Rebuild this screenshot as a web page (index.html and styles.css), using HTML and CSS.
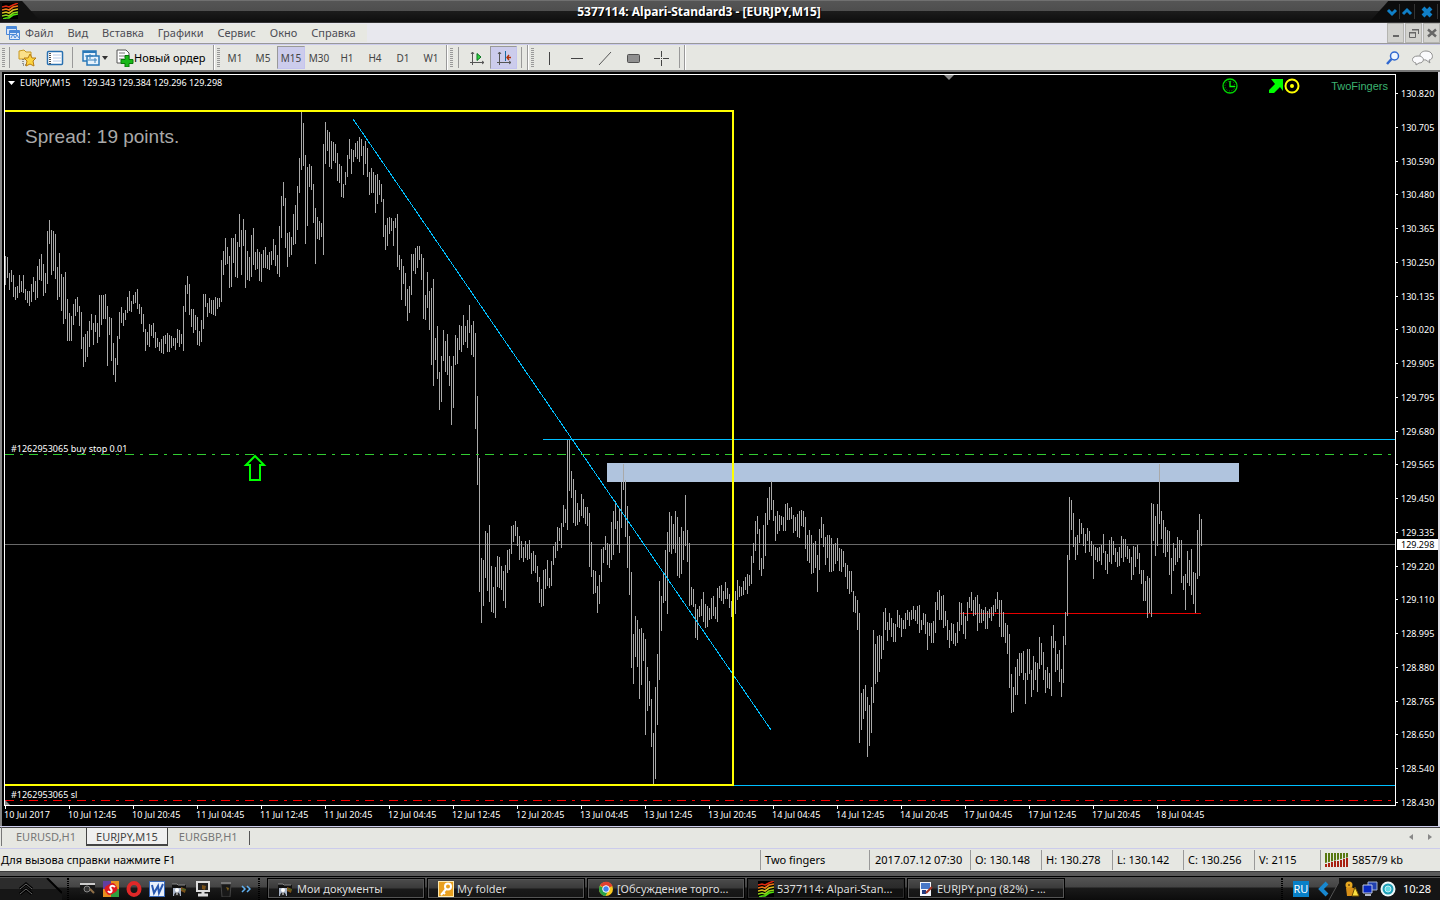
FILE: index.html
```html
<!DOCTYPE html>
<html lang="ru">
<head>
<meta charset="utf-8">
<title>5377114: Alpari-Standard3 - [EURJPY,M15]</title>
<link rel="stylesheet" href="styles.css">
</head>
<body>
<svg class="defs" width="0" height="0" aria-hidden="true">
  <symbol id="logo" viewBox="0 0 16 16">
    <rect width="16" height="16" fill="#000"/>
    <g fill="none" stroke-width="1.6">
      <path d="M0 4l4-1 3 1 4-2 5-2" stroke="#e02810"/>
      <path d="M0 7l4-1 3 1 4-3 5-1" stroke="#f07818"/>
      <path d="M0 10l4-1 3 1 4-3 5-1" stroke="#d8c020"/>
      <path d="M0 13l4-1 3 1 4-3 5-1" stroke="#90d818"/>
      <path d="M1 16l3-1 3 0 4-3 5-1" stroke="#50e010"/>
    </g>
  </symbol>
  <symbol id="folder" viewBox="0 0 16 16">
    <path d="M0 3h6l1 1h7v9H0z" fill="#111"/><path d="M0 3h5l1 1h7" stroke="#888" fill="none"/>
    <path d="M9 6l5 2-1 4-4-2z" fill="#7a5018"/><path d="M10 8l4 1" stroke="#446a28"/>
    <rect x="1" y="7" width="8" height="8" fill="#a8b4c8"/><circle cx="5" cy="9" r="2" fill="#fff"/><path d="M2 15c0-5 6-5 6 0z" fill="#222"/><path d="M5 11v3" stroke="#fff"/>
  </symbol>
</svg>

<header class="titlebar">
  <div class="titlebar-corner"><svg class="i16" viewBox="0 0 16 16"><use href="#logo"/></svg></div>
  <h1>5377114: Alpari-Standard3 - [EURJPY,M15]</h1>
  <div class="window-buttons">
    <button aria-label="Свернуть"><svg width="14" height="14"><path d="M3 5l4 4 4-4" fill="none" stroke="#1080c8" stroke-width="3"/></svg></button>
    <button aria-label="Развернуть"><svg width="14" height="14"><path d="M3 9l4-4 4 4" fill="none" stroke="#1080c8" stroke-width="3"/></svg></button>
    <button class="close" aria-label="Закрыть"><svg width="22" height="14"><path d="M8 3l8 8M16 3l-8 8" stroke="#1080c8" stroke-width="4"/></svg></button>
  </div>
</header>

<nav class="menubar">
  <div class="menu">
    <svg width="16" height="16"><g fill="#dbe8fa" stroke="#4a88d8"><path d="M1.500 1.500h10v8h-10zM4.500 5.500h10v9h-10z"/><path d="M1 3h11M4 7h11" stroke-width="2"/><path d="M6 13l2-4 2 4 2-3 2 3" fill="none"/></g></svg>
    <button>Файл</button><button>Вид</button><button>Вставка</button><button>Графики</button><button>Сервис</button><button>Окно</button><button>Справка</button>
  </div>
  <div class="mdi">
    <button aria-label="Свернуть окно"><svg width="10" height="10"><path d="M2 8h6" stroke="#666" stroke-width="2"/></svg></button>
    <button aria-label="Восстановить окно"><svg width="10" height="10"><path d="M3 2h7M9.500 1v5M0 5h7M.5 4v5.500h6V4" fill="none" stroke="#666"/><path d="M3 1.500h7M0 4.500h7" stroke="#666"/></svg></button>
    <button aria-label="Закрыть окно"><svg width="10" height="10"><path d="M1 1.500l8 7M9 1.500l-8 7" stroke="#666" stroke-width="2.400"/></svg></button>
  </div>
</nav>

<div class="toolbar">
  <div class="tools tools-main">
    <span class="grip"></span><span class="sep"></span>
    <button class="tool" aria-label="Избранное"><svg width="20" height="18"><path d="M2 2l5-1 2 2h5v7H2z" fill="#fbe08a" stroke="#c89820"/><path d="M6 10v6h4" fill="none" stroke="#444" stroke-dasharray="1 1"/><path d="M13 5l2 4h4l-3 3 1 5-4-2-4 2 1-5-3-3h4z" fill="#fcd440" stroke="#b87c10"/></svg></button>
    <button class="tool" aria-label="Обзор рынка"><svg width="18" height="16"><rect x="1.500" y="1.500" width="15" height="13" rx="1" fill="#fff" stroke="#2870b0" stroke-width="1.500"/><path d="M4 3v11" stroke="#555" stroke-width="2" stroke-dasharray="1 1"/><path d="M7 5h8M7 8h8M7 11h8" stroke="#b8cce8"/></svg></button>
    <span class="sep"></span>
    <button class="tool wide" aria-label="Новый график"><svg width="18" height="18"><g fill="#e6f2fc" stroke="#2878b8" stroke-width="1.500"><path d="M1 2h13v10H1z"/><path d="M5 7h12v9H5z"/><path d="M1 3h13" stroke-width="2"/></g><path d="M3 7h8M8 5v5M6 11h9M13 9v5" stroke="#3880b8"/></svg><svg width="6" height="4"><path d="M0 0h6L3 4z" fill="#333"/></svg></button>
    <button class="order"><svg width="18" height="18"><path d="M1 1h9l3 3v10H1z" fill="#fff" stroke="#555"/><path d="M3 4h6M3 7h8M3 10h5" stroke="#777"/><path d="M9 6.500h4v4h4v4h-4v3.500H9v-3.500H5v-4h4z" fill="#18b818" stroke="#087808"/></svg>Новый ордер</button>
  </div>
  <div class="tools tools-periods">
    <span class="grip"></span>
    <button class="period">M1</button><button class="period">M5</button><button class="period on" aria-pressed="true">M15</button><button class="period">M30</button><button class="period">H1</button><button class="period">H4</button><button class="period">D1</button><button class="period">W1</button>
  </div>
  <div class="tools tools-shift">
    <span class="grip"></span><span class="sep"></span>
    <button class="tool" aria-label="Автопрокрутка"><svg width="16" height="16"><path d="M3.500 2v13M1 12.500h14M2 4l1.500-2L5 4M13 11l2 1.500-2 1.500" fill="none" stroke="#555"/><path d="M8 3.500l4 3.500-4 3.500z" fill="#30d840" stroke="#087020"/></svg></button>
    <button class="tool on" aria-label="Сдвиг графика" aria-pressed="true"><svg width="16" height="16"><path d="M3.500 2v13M1 12.500h14M2 4l1.500-2L5 4M13 11l2 1.500-2 1.500" fill="none" stroke="#555"/><path d="M9.500 1v10" stroke="#1868a0"/><path d="M15 7.500h-4M13 5l-2 2.500 2 2.500" fill="none" stroke="#b03008" stroke-width="1.400"/></svg></button>
    <span class="sep"></span>
  </div>
  <div class="tools tools-draw">
    <span class="grip"></span>
    <button class="tool" aria-label="Вертикальная линия"><svg width="16" height="16"><path d="M8.500 2v13" stroke="#444"/></svg></button>
    <button class="tool" aria-label="Горизонтальная линия"><svg width="16" height="16"><path d="M2 8.500h12" stroke="#444"/></svg></button>
    <button class="tool" aria-label="Трендовая линия"><svg width="16" height="16"><path d="M2 15L14 2" stroke="#555"/></svg></button>
    <button class="tool" aria-label="Прямоугольник"><svg width="16" height="16"><rect x="2.500" y="4.500" width="12" height="8" rx="1" fill="#909090" stroke="#505050"/></svg></button>
    <button class="tool" aria-label="Перекрестие"><svg width="16" height="16"><path d="M1 8.500h6M10 8.500h6M8.500 1v6M8.500 10v6M8 8.500h1" stroke="#444"/></svg></button>
    <span class="sep"></span>
  </div>
  <div class="tools-right">
    <button aria-label="Поиск"><svg width="14" height="14"><circle cx="8.500" cy="5" r="4" fill="#eef6ff" stroke="#3068d0" stroke-width="1.500"/><path d="M5.500 8L1 13" stroke="#3068d0" stroke-width="2.500"/></svg></button>
    <button aria-label="Сообщения"><svg width="22" height="16"><g fill="#fafafc" stroke="#909090"><path d="M14 1c8 0 8 9 3 9l1 3-4-3c-8 0-8-9 0-9z"/><path d="M6 6c7 0 7 7 1 7l-3 2v-2c-5-1-5-7 2-7z"/></g></svg></button>
  </div>
</div>

<main class="chart">
  <div class="plot">
    <svg class="plot-canvas" width="100%" height="100%" role="img" aria-label="EURJPY,M15">
      <g transform="translate(-5 -75)">
        <rect x="607" y="463" width="632" height="19" fill="#b0c4de"/>
        <rect x="5" y="544" width="100%" height="1" fill="#696969"/>
        <rect x="960" y="613" width="241" height="1" fill="#e80000"/>
        <path id="bars" stroke="#a9a9a9" shape-rendering="crispEdges"/>
        <rect x="543" y="439" width="100%" height="1" fill="#00bfff"/>
        <rect x="734" y="785" width="100%" height="1" fill="#00bfff"/>
        <path d="M353 119L771 730" stroke="#00bfff" shape-rendering="crispEdges"/>
        <line x1="5" x2="1392" y1="454.500" y2="454.500" stroke="#32cd32" stroke-dasharray="9 6 3 6"/>
        <line x1="5" x2="1392" y1="800.500" y2="800.500" stroke="#f00" stroke-dasharray="9 6 3 6"/>
        <path d="M5 111H733V785H5" fill="none" stroke="#ff0" stroke-width="2"/>
        <path d="M255 456l9 9h-4v15h-10v-15h-4z" fill="none" stroke="#0f0" stroke-width="2"/>
        <path d="M944 75h10l-5 5z" fill="#888"/>
        <path d="M5 800l5 5H5z" fill="#888"/>
        <path d="M8 81h7l-3.500 4z" fill="#fff"/>
        <g class="plot-text">
          <text x="20" y="86">EURJPY,M15</text>
          <text x="82" y="86">129.343 129.384 129.296 129.298</text>
          <text x="11" y="452">#1262953065 buy stop 0.01</text>
          <text x="11" y="798">#1262953065 sl</text>
        </g>
        <text class="spread" x="25" y="143">Spread: 19 points.</text>
      </g>
    </svg>
    <div class="expert">
      <svg width="62" height="16"><circle cx="8" cy="8" r="7" fill="none" stroke="#00d800" stroke-width="1.300"/><circle cx="8" cy="8" r="5" fill="none" stroke="#00a800" stroke-dasharray="1 1.600"/><path d="M8 3v5.500h5" fill="none" stroke="#0f0" stroke-width="1.300"/><path d="M49 1h12v12l-3-4-6 6h-5v-3l6-6z" fill="#0f0"/></svg>
      <svg width="16" height="16"><circle cx="8" cy="8" r="6.500" fill="none" stroke="#ff0" stroke-width="2"/><circle cx="8" cy="8" r="2" fill="#ff0"/></svg>
      <span>TwoFingers</span>
    </div>
  </div>
  <div class="price-axis">
    <span>130.820</span><span>130.705</span><span>130.590</span><span>130.480</span><span>130.365</span><span>130.250</span><span>130.135</span><span>130.020</span><span>129.905</span><span>129.795</span><span>129.680</span><span>129.565</span><span>129.450</span><span>129.335</span><span>129.220</span><span>129.110</span><span>128.995</span><span>128.880</span><span>128.765</span><span>128.650</span><span>128.540</span><span>128.430</span>
    <strong class="price-now">129.298</strong>
  </div>
  <div class="time-axis">
    <span>10 Jul 2017</span><span>10 Jul 12:45</span><span>10 Jul 20:45</span><span>11 Jul 04:45</span><span>11 Jul 12:45</span><span>11 Jul 20:45</span><span>12 Jul 04:45</span><span>12 Jul 12:45</span><span>12 Jul 20:45</span><span>13 Jul 04:45</span><span>13 Jul 12:45</span><span>13 Jul 20:45</span><span>14 Jul 04:45</span><span>14 Jul 12:45</span><span>14 Jul 20:45</span><span>17 Jul 04:45</span><span>17 Jul 12:45</span><span>17 Jul 20:45</span><span>18 Jul 04:45</span>
  </div>
</main>

<div class="tabs">
  <button>EURUSD,H1</button><button class="on">EURJPY,M15</button><button>EURGBP,H1</button><span class="tabs-end"></span>
  <div class="tabs-scroll">
    <button aria-label="Назад"><svg width="4" height="6"><path d="M4 0v6L0 3z" fill="#888"/></svg></button>
    <button aria-label="Вперёд"><svg width="4" height="6"><path d="M0 0v6l4-3z" fill="#888"/></svg></button>
  </div>
</div>

<footer class="status">
  <span class="hint">Для вызова справки нажмите F1</span>
  <span class="cell c-profile">Two fingers</span>
  <span class="cell c-date">2017.07.12 07:30</span>
  <span class="cell c-num">O: 130.148</span>
  <span class="cell c-num">H: 130.278</span>
  <span class="cell c-num">L: 130.142</span>
  <span class="cell c-num">C: 130.256</span>
  <span class="cell c-vol">V: 2115</span>
  <span class="cell c-net"><svg width="24" height="14"><path d="M0 5h24" stroke="#587810" stroke-width="10" stroke-dasharray="2 1"/><path d="M0 14V10L24 4V14z" fill="#e6e7e2"/><path d="M1 14v-3M4 14v-4M7 14v-5M10 14V8M13 14V8M16 14V7M19 14V6M22 14V5" stroke="#a82010" stroke-width="2"/></svg>5857/9 kb</span>
</footer>

<div class="taskbar">
  <button class="start" aria-label="Пуск"><svg width="62" height="22"><path d="M0 0h46l16 16v6H0z" fill="#161616"/><path d="M0 0h46l11 11H0z" fill="#2c2c2c"/><path d="M47 0l15 15" stroke="#000" stroke-width="2"/><path d="M20 11l6-5 6 5M20 16l6-5 6 5" fill="none" stroke="#000" stroke-width="3"/><path d="M20 11l6-5 6 5M20 16l6-5 6 5" fill="none" stroke="#666"/></svg></button>
  <span class="dots"></span>
  <div class="quick">
    <button aria-label="Снимок"><svg class="i16"><rect x="0" y="2" width="15" height="11" fill="#181818"/><path d="M0 3h15" stroke="#ccc" stroke-width="2"/><circle cx="7" cy="8" r="3" fill="#333" stroke="#888"/><path d="M10 8l4 4" stroke="#907048" stroke-width="2"/></svg></button>
    <button aria-label="Программа"><svg class="i16"><rect width="16" height="16" fill="#e89020"/><path d="M0 0h8v8H0z" fill="#6040a0"/><path d="M8 8h8v8H8z" fill="#30a040"/><rect x="2" y="3" width="12" height="10" rx="4" fill="#e01820" transform="rotate(-30 8 8)"/><path d="M5 10c2 3 5 0 3-2s1-5 4-2" fill="none" stroke="#fff" stroke-width="2"/></svg></button>
    <button aria-label="Opera"><svg class="i16"><ellipse cx="8" cy="8" rx="5.500" ry="6" fill="none" stroke="#e02828" stroke-width="4"/></svg></button>
    <button aria-label="Word"><svg class="i16"><rect x=".5" y=".5" width="15" height="15" fill="#e8f0fc" stroke="#3868b8"/><path d="M3 4l2 8 4-7 1 7 4-9" fill="none" stroke="#2858b0" stroke-width="2"/></svg></button>
    <button aria-label="Документы"><svg class="i16" viewBox="0 0 16 16"><use href="#folder"/></svg></button>
    <button aria-label="Компьютер"><svg class="i16"><rect x="2" y="1" width="12" height="9" fill="#222" stroke="#ddd" stroke-width="2"/><path d="M3 14h10M8 11v3" stroke="#ddd" stroke-width="3"/><path d="M7 4l4 1-1 4-3-1z" fill="#785018"/></svg></button>
    <button aria-label="Корзина"><svg class="i16"><path d="M3 3h10l-1 13H4z" fill="#181818" stroke="#444"/><path d="M3 2h10" stroke="#777" stroke-width="2"/><path d="M8 6l3 1-1 3z" fill="#806018"/></svg></button>
    <button class="more" aria-label="Ещё"><svg width="10" height="8"><path d="M1 1l3 3-3 3M6 1l3 3-3 3" fill="none" stroke="#60b0f0" stroke-width="1.500"/></svg></button>
  </div>
  <span class="dots"></span>
  <div class="tasks">
    <button><svg class="i16" viewBox="0 0 16 16"><use href="#folder"/></svg>Мои документы</button>
    <button><svg class="i16"><rect width="16" height="16" rx="1" fill="#e8a020"/><rect x=".5" y=".5" width="15" height="15" fill="none" stroke="#fbe8b0"/><circle cx="10" cy="5.500" r="3" fill="none" stroke="#fff" stroke-width="2"/><path d="M8 8l-5 6M5 11l2 2" stroke="#fff" stroke-width="2"/></svg>My folder</button>
    <button><svg class="i16"><circle cx="8" cy="8" r="7" fill="#f8c820"/><path d="M8 8L2 4.300A7 7 0 0 1 14.500 5z" fill="#e04030"/><path d="M8 8L1.700 5A7 7 0 0 0 7.500 15l3-6z" fill="#28a048"/><circle cx="8" cy="8" r="3.300" fill="#4080f0" stroke="#fff"/></svg>[Обсуждение торго...</button>
    <button class="on"><svg class="i16" viewBox="0 0 16 16"><use href="#logo"/></svg>5377114: Alpari-Stan...</button>
    <button><svg class="i16"><path d="M2 1h11v14H2z" fill="#f4f6fc"/><path d="M3 2h9v6H3z" fill="#4878c8"/><path d="M4 10h4M4 12h4" stroke="#223a80" stroke-width="2"/><path d="M8 12l6-6" stroke="#a03020" stroke-width="2"/></svg>EURJPY.png (82%) - ...</button>
  </div>
  <span class="dots tray-dots"></span>
  <span class="lang">RU</span>
  <svg class="tray-arrow" width="30" height="22"><path d="M18 5l-6 6 6 6" fill="none" stroke="#1888d0" stroke-width="4"/><path d="M30 4L20 22h10z" fill="#151515"/><path d="M30 4L20 22" stroke="#555"/></svg>
  <div class="tray">
    <svg class="i16"><circle cx="5" cy="4" r="3.500" fill="#e8a820"/><path d="M2 7c5-2 12 0 12 8H3z" fill="#d89018"/><circle cx="5" cy="4" r="1" fill="#704808"/><path d="M11 6l4 9H8z" fill="#fce040" stroke="#705000"/></svg>
    <svg class="i16"><path d="M6 1h9v8H6z" fill="#2040b0" stroke="#a0b0d0"/><path d="M1 4h9v8H1z" fill="#0828c0" stroke="#c0c8e0"/><path d="M3 14h6" stroke="#b0b8c8" stroke-width="2"/></svg>
    <svg class="i16"><circle cx="8" cy="8" r="7.500" fill="#f0f8f8"/><circle cx="8" cy="8" r="5.500" fill="#20a0b8"/><circle cx="8" cy="8" r="3" fill="#60d8e0" stroke="#c0f0f4"/></svg>
    <time>10:28</time>
  </div>
</div>
<script src="chart.js"></script>
</body>
</html>
```
FILE: styles.css
```css
* { box-sizing: border-box; }
html, body { margin: 0; height: 100%; }
body {
  display: flex;
  flex-direction: column;
  overflow: hidden;
  background: #e6e7e2;
  color: #000;
  font: 11px/14px "Noto Sans", "Open Sans", sans-serif;
}
button { margin: 0; padding: 0; border: 0; background: none; color: inherit; font: inherit; white-space: nowrap; }
svg { display: block; flex: none; }
.defs { position: absolute; }
.i16 { width: 16px; height: 16px; }

/* Title bar */
.titlebar {
  display: flex;
  flex: none;
  align-items: center;
  height: 23px;
  border-top: 1px solid #707070;
  border-bottom: 1px solid #333;
  background: linear-gradient(#555, #4e4e4e 10px, #1c1c1c 10px, #0e0e0e);
  color: #fff;
}
.titlebar-corner { flex: 1; padding-left: 2px; height: 21px; padding-top: 2px; background: linear-gradient(48deg, #111 30px, transparent 31px); }
.titlebar h1 { margin: 0; padding-right: 42px; font-size: 12px; line-height: 14px; font-weight: 700; text-shadow: 1px 1px #000; }
.window-buttons { flex: 1; display: flex; justify-content: flex-end; align-self: stretch; padding: 3px 2px 3px 0; background: linear-gradient(-48deg, #0c0c0c 52px, transparent 53px); }
.window-buttons button { border-right: 1px solid #333; }

/* Menu */
.menubar { display: flex; flex: none; justify-content: space-between; height: 22px; background: #e8e8ee; border-bottom: 1px solid #ccccec; box-shadow: inset 0 -1px #999; }
.menu { display: flex; gap: 14px; align-items: center; height: 18px; padding: 0 11px 0 5px; margin-top: 1px; background: #e7e8e2; color: #4c4c54; }
.menu svg { margin-right: -10px; }
.mdi { display: flex; gap: 1px; height: 20px; }
.mdi button { display: grid; place-items: center; width: 17px; background: #d2d2ce; border: 1px solid #b4b4b0; }

/* Toolbar */
.toolbar { display: flex; flex: none; height: 27px; border-bottom: 2px solid #777; background: #e6e7e2; }
.tools { display: flex; align-items: center; padding-left: 2px; border-right: 1px solid #999; box-shadow: 1px 0 #fff; }
.tools-main { width: 214px; }
.tools-periods { width: 233px; padding-left: 3px; }
.tools-shift { width: 81px; padding-left: 3px; }
.tools-draw { width: 157px; padding-left: 3px; }
.grip { width: 3px; height: 20px; margin-right: 1px; background: repeating-linear-gradient(#999 0 1px, transparent 1px 2px); }
.sep { width: 1px; height: 21px; margin: 0 4px; background: #999; }
.tools-main .sep { margin: 0 3px; }
.tool { display: flex; align-items: center; justify-content: center; width: 28px; height: 23px; }
.tool.wide { justify-content: flex-start; width: 40px; padding-left: 6px; gap: 2px; }
.tools-shift .tool { width: 27px; }
.tool.on, .period.on { background: #ccccec; border: 1px solid #999; border-right-color: #c4c4f0; border-bottom-color: #c4c4f0; }
.order { display: flex; align-items: center; }
.period { width: 28px; height: 23px; color: #444; font-size: 10px; }
.tools-right { display: flex; gap: 12px; align-items: center; margin-left: auto; padding-right: 6px; }

/* Chart */
.chart {
  flex: 1;
  min-height: 0;
  display: grid;
  grid-template: minmax(0, 1fr) 20px / minmax(0, 1fr) 42px;
  padding: 2px 0 0 2px;
  border-left: 2px solid #888;
  border-right: 2px solid #dcdce4;
  background: #000;
  color: #fff;
  font-size: 9px;
  line-height: 14px;
}
.plot { position: relative; overflow: hidden; border: 1px solid #fff; }
.plot-canvas { display: block; }
.plot-text { fill: #fff; font-size: 9px; }
.spread { fill: #a9a9a9; font: 19px "Liberation Sans", Arial, sans-serif; }
.expert { position: absolute; top: 3px; right: 7px; display: flex; align-items: center; color: #3cb371; font: 11px/16px "Liberation Sans", Arial, sans-serif; }
.expert span { margin-left: 31px; }
.price-axis { position: relative; display: flex; flex-direction: column; justify-content: space-between; padding-top: 13px; margin-bottom: -4px; }
.price-axis span { position: relative; padding-left: 5px; }
.price-axis span::before { content: ""; position: absolute; left: 0; top: 6px; width: 2px; height: 1px; background: #fff; }
.price-now { position: absolute; left: 1px; right: 0; top: 465px; padding-left: 4px; background: #fff; color: #000; font-weight: 400; line-height: 11px; }
.time-axis { display: flex; grid-column: 1 / -1; overflow: hidden; }
.time-axis span { position: relative; flex: none; width: 64px; padding-top: 2px; white-space: nowrap; }
.time-axis span::before { content: ""; position: absolute; left: 1px; top: 0; width: 1px; height: 3px; background: #fff; }

/* Chart tabs */
.tabs { display: flex; flex: none; height: 23px; padding: 0 8px 2px 1px; border-top: 1px solid #ccccec; border-bottom: 1px solid #ccccec; box-shadow: inset 0 1px #444; color: #777; }
.tabs > button { padding: 1px 11px 0; }
.tabs > button:first-child { padding: 1px 10px 0 14px; border-left: 1px solid #777; }
.tabs > .on { padding: 1px 9px 0; margin: 1px 0 0; border: solid #444; border-width: 0 1px 2px; background: #f0f0f0; color: #444; }
.tabs-end { width: 1px; height: 14px; margin-top: 4px; background: #555; }
.tabs-scroll { display: flex; gap: 15px; align-items: center; margin-left: auto; }

/* Status bar */
.status { display: flex; flex: none; height: 22px; padding: 1px 0; align-items: stretch; line-height: 20px; white-space: nowrap; }
.hint { flex: 1; padding-left: 1px; }
.cell { padding-left: 4px; border-left: 1px solid #999; }
.c-profile { width: 109px; }
.c-date { width: 101px; padding-left: 5px; }
.c-num { width: 71px; }
.c-vol { width: 66px; }
.c-net { display: flex; gap: 3px; align-items: center; width: 120px; }

/* Task bar */
.taskbar {
  display: flex;
  flex: none;
  align-items: center;
  height: 29px;
  padding-top: 5px;
  border-top: 1px solid #3c3c3c;
  background: linear-gradient(#5a5a5a 4px, #000 4px 5px, #555 5px, #444 15px, #1a1a1a 16px, #0c0c0c);
  color: #ddd;
}
.dots { flex: none; width: 2px; height: 22px; margin: 0 5px; border-left: 1px dotted #000; border-right: 1px dotted #000; }
.quick { display: flex; gap: 7px; align-items: center; padding-left: 6px; }
.more { width: 12px; }
.tasks { display: flex; flex: 1; gap: 2px; min-width: 0; padding-left: 2px; }
.tasks button {
  display: flex;
  gap: 3px;
  align-items: center;
  flex: 0 1 158px;
  height: 21px;
  padding: 0 10px;
  overflow: hidden;
  border: 1px solid #000;
  box-shadow: inset 0 0 0 1px #555;
  background: linear-gradient(#4c4c4c, #3a3a3a 9px, #1a1a1a 10px, #141414);
}
.tasks .on { background: linear-gradient(#333, #2a2a2a 9px, #111 10px, #111); box-shadow: inset 0 0 0 1px #2a2a2a; }
.tray-dots { margin-right: 10px; }
.lang { flex: none; width: 16px; height: 16px; background: #0880c8; color: #fff; line-height: 16px; text-align: center; }
.tray { display: flex; gap: 2px; align-items: center; height: 22px; padding: 0 9px 0 5px; background: #151515; color: #fff; }
.tray time { margin-left: 5px; }
```
FILE: chart.js
```js
// Price bars as "high,low" pairs in ticks below the segment's base line.
const TICKS_PER_PIXEL = 3;
const BAR_STEP = 2;
const FIRST_BAR_X = 5;

const segments = [
  { base: 100, bars: `468,554 471,533 519,570 510,546 525,591 561,600 558,594 525,579 543,576 525,579 567,600 573,609 573,618 552,606 531,576 543,600 498,594 477,540 462,543 492,588 519,579 393,552 360,432 390,525 393,513 402,537 501,600 459,591 522,633 531,672 516,657 597,723 639,723 648,723 612,675 597,648 591,636 618,678 636,747 711,801 702,786 693,771 663,741 642,690 669,735 645,696 669,729 585,711 585,675 585,657 582,657 618,798 651,705 654,783 729,825 774,846 708,795 636,717 621,669 639,678 630,660 591,639 573,633 603,636 585,612 576,609 567,627 612,642 621,672 642,696 687,753 696,735 672,741 675,708 669,714 696,744 714,741 726,753 717,759 708,762 705,732 699,756 705,756 708,744 714,738 714,750 687,729 690,741 702,732 618,753 555,636 528,582 552,645 627,681 627,699 645,690 651,735 693,738 660,726 582,687 582,621 609,651 594,639 600,642 600,645 591,648 594,627 594,621 480,606 453,525 414,495 441,492 468,564 414,561 414,489 402,531 426,534 342,441 390,525 357,438 390,564 453,540 471,543 405,531 384,495 456,510 447,507 456,543 462,546 450,504 441,504 465,507 456,510 453,495 417,480 435,498 465,522 378,531 288,414 246,318 294,444 399,501 396,471 411,465 342,435 315,432 258,390 174,279 36,210 69,198 165,432 201,378 192,261 198,270 252,369 324,492 351,417 363,420 369,411 132,465 66,192 90,153 96,201 123,207 126,183 132,189 159,243 192,249 198,291 252,294 216,255 165,231 117,177 147,222 150,186 129,171 123,177 111,186 117,168 138,225 123,192 144,231 216,285` },
  { base: 180, bars: `-36,39 -24,39 -15,99 -18,72 0,45 12,66 57,171 135,210 114,198 111,162 114,153 123,198 114,144 102,261 225,270 237,360 258,312 279,378 327,423 318,399 222,345 222,273 204,282 198,264 198,240 222,300 234,417 345,420 276,384 333,450 324,555 297,618 474,540 438,597 576,690 528,666 450,543 483,576 462,585 528,618 558,735 528,684 465,555 474,552 435,510 438,516 405,495 438,486 420,504 375,459 435,525 423,531 459,747 648,915 834,1236 1134,1329 1140,1278 1053,1194 1059,1233 1035,1266 1158,1296 1221,1299 1161,1314 1128,1221 1131,1224 1158,1230 1173,1263 1155,1284 1110,1179 1107,1170 1038,1122 1035,1086 1023,1068 1041,1098 1068,1140 1083,1134 1101,1146 1083,1134 1092,1140 1080,1137 1119,1182 1113,1173 1125,1179 1158,1206 1191,1269 1227,1281 1170,1278 1167,1227 1140,1218 1194,1224 1143,1218 1098,1155 1086,1134 1041,1113 1044,1083 1029,1104 975,1041 987,1029 778,1050` },
  { base: 430, bars: `30,183 123,204 147,279 180,288 219,285 240,276 192,258 207,264 231,282 231,288 249,411 336,441 420,492 423,489 468,549 435,522 357,456 351,399 318,360 339,405 342,414 276,390 243,375 213,297 273,345 237,369 156,294 102,180 150,321 228,414 318,495 426,714 612,762 558,681 570,711 597,807 594,765 609,693 627,915 711,843 753,828 807,951 909,1062 771,1047 672,885 453,750 498,603 426,519 360,513 306,552 246,366 258,372 282,357 243,369 261,438 321,444 291,432 303,390 195,348 300,396 339,528 471,525 477,531 522,624 537,630 528,561 507,558 486,576 522,594 528,591 534,570 504,567 498,558 531,567 474,576 468,504 465,513 483,522 456,507 474,507 492,534 513,561 498,555 483,552 450,510 468,501 471,498 453,495 441,480 432,492 435,468 378,462 339,399 273,363 258,312 297,420 384,438 285,417 249,378 204,285 171,270 153,240 210,273 258,333 243,312 255,303 258,285 261,303 222,303 219,270 234,270 231,267 255,309 261,303 252,321 243,324 240,288 243,291 261,357 315,393 300,399 315,432 339,429 333,414 375,486 297,420` },
  { base: 430, bars: `261,324 282,351 321,405 315,384 315,426 324,426 342,423 339,402 324,393 354,423 357,426 363,411 399,441 405,477 423,492 423,486 483,546 498,549 510,600 549,939 789,900 777,867 765,843 801,981 825,948 771,909 600,819 642,762 618,756 615,726 618,687 546,660 534,600 576,633 549,600 564,621 579,636 582,636 540,591 555,594 564,621 570,597 549,597 540,570 546,588 540,570 528,567 540,573 528,582 525,609 570,600 549,585 552,612 576,660 579,618 579,639 573,639 516,609 486,540 480,570 498,570 495,594 543,588 570,630 600,654 579,633 582,642 609,648 576,639 516,603 519,585 546,612 558,627 516,573 501,534 486,543 510,558 501,555 495,603 522,579 537,579 540,573 531,597 543,597 537,564 531,573 525,558 507,546 486,537 510,591 510,621 546,621 579,639 585,672 612,774 732,849 771,846 711,795 687,795 669,738 669,729 663,750 729,822 657,750 657,732 720,801 678,780 696,750 699,786 621,717 639,705 666,750 720,789 711,774 729,777 618,798 585,654 633,726 672,720 660,756 717,801 618,759 546,645 375,558 201,390 210,300 249,351 321,390 315,375 267,339 279,312 294,348 312,369 294,333 303,366 333,378 345,447 351,390 354,396 351,393 345,405 312,369 363,420 372,432 330,396 321,402 333,375 354,396 366,411 351,408 318,384 327,396 327,381 348,387 357,399 381,450 348,435 351,411 345,387 369,432 420,462 420,513 453,513 438,564 444,549 219,561 222,333 258,378 222,348 102,282 243,327 270,369 291,381 300,366 303,435 384,492 339,423 354,405 321,396 330,384 330,459 438,480 432,540 363,459 390,468 357,495 426,522 429,549 300,447 252,438 267,348` }
];

let x = FIRST_BAR_X;
let path = "";
for (const { base, bars } of segments) {
  for (const bar of bars.split(" ")) {
    const [high, low] = bar.split(",").map(v => base + Math.round(v / TICKS_PER_PIXEL));
    path += `M${x + 0.5} ${high}V${low}`;
    x += BAR_STEP;
  }
}
document.getElementById("bars").setAttribute("d", path);
```
